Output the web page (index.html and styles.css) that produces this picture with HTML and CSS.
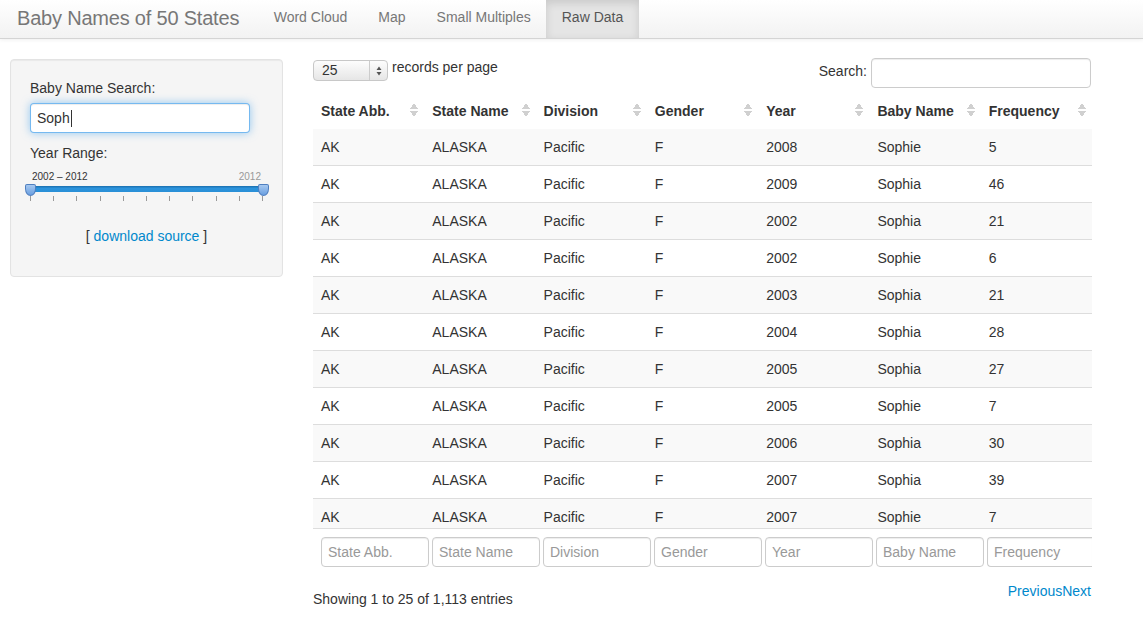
FILE: index.html
```html
<!DOCTYPE html>
<html lang="en">
<head>
<meta charset="utf-8">
<title>Baby Names of 50 States</title>
<link rel="stylesheet" href="styles.css">
</head>
<body>
<header class="navbar">
  <span class="brand">Baby Names of 50 States</span>
  <nav class="nav">
    <a class="nav-link">Word Cloud</a>
    <a class="nav-link">Map</a>
    <a class="nav-link">Small Multiples</a>
    <a class="nav-link active">Raw Data</a>
  </nav>
</header>

<div class="page">
  <aside class="well">
    <label class="label">Baby Name Search:</label>
    <div class="name-input">Soph<span class="caret"></span></div>
    <label class="label year-label">Year Range:</label>
    <div class="slider">
      <div class="slider-labels">
        <span class="range-text">2002 – 2012</span>
        <span class="max-text">2012</span>
      </div>
      <div class="track">
        <div class="bar"></div>
        <span class="handle handle-left"></span>
        <span class="handle handle-right"></span>
      </div>
      <div class="ticks">
        <i></i><i></i><i></i><i></i><i></i><i></i><i></i><i></i><i></i><i></i><i></i>
      </div>
    </div>
    <p class="download">[ <a class="link">download source</a> ]</p>
  </aside>

  <main class="main">
    <div class="controls">
      <div class="length">
        <div class="select"><span class="select-val">25</span><span class="select-arrows"><svg width="6" height="10" viewBox="0 0 6 10"><path d="M3 0.5 L5.5 4 H0.5 Z M3 9.5 L5.5 6 H0.5 Z" fill="#555"/></svg></span></div>
        <span class="length-text">records per page</span>
      </div>
      <div class="search">
        <span>Search:</span>
        <div class="search-input"></div>
      </div>
    </div>

    <div class="thead">
      <div class="th">State Abb.<span class="sort"></span></div>
      <div class="th">State Name<span class="sort"></span></div>
      <div class="th">Division<span class="sort"></span></div>
      <div class="th">Gender<span class="sort"></span></div>
      <div class="th">Year<span class="sort"></span></div>
      <div class="th">Baby Name<span class="sort"></span></div>
      <div class="th">Frequency<span class="sort"></span></div>
    </div>

    <div class="scroll-body">
      <table class="table">
        <tbody>
          <tr><td>AK</td><td>ALASKA</td><td>Pacific</td><td>F</td><td>2008</td><td>Sophie</td><td>5</td></tr>
          <tr><td>AK</td><td>ALASKA</td><td>Pacific</td><td>F</td><td>2009</td><td>Sophia</td><td>46</td></tr>
          <tr><td>AK</td><td>ALASKA</td><td>Pacific</td><td>F</td><td>2002</td><td>Sophia</td><td>21</td></tr>
          <tr><td>AK</td><td>ALASKA</td><td>Pacific</td><td>F</td><td>2002</td><td>Sophie</td><td>6</td></tr>
          <tr><td>AK</td><td>ALASKA</td><td>Pacific</td><td>F</td><td>2003</td><td>Sophia</td><td>21</td></tr>
          <tr><td>AK</td><td>ALASKA</td><td>Pacific</td><td>F</td><td>2004</td><td>Sophia</td><td>28</td></tr>
          <tr><td>AK</td><td>ALASKA</td><td>Pacific</td><td>F</td><td>2005</td><td>Sophia</td><td>27</td></tr>
          <tr><td>AK</td><td>ALASKA</td><td>Pacific</td><td>F</td><td>2005</td><td>Sophie</td><td>7</td></tr>
          <tr><td>AK</td><td>ALASKA</td><td>Pacific</td><td>F</td><td>2006</td><td>Sophia</td><td>30</td></tr>
          <tr><td>AK</td><td>ALASKA</td><td>Pacific</td><td>F</td><td>2007</td><td>Sophia</td><td>39</td></tr>
          <tr><td>AK</td><td>ALASKA</td><td>Pacific</td><td>F</td><td>2007</td><td>Sophie</td><td>7</td></tr>
        </tbody>
      </table>
    </div>

    <div class="tfoot">
      <div class="filter">State Abb.</div>
      <div class="filter">State Name</div>
      <div class="filter">Division</div>
      <div class="filter">Gender</div>
      <div class="filter">Year</div>
      <div class="filter">Baby Name</div>
      <div class="filter last">Frequency</div>
    </div>

    <div class="bottom">
      <span class="info">Showing 1 to 25 of 1,113 entries</span>
      <span class="paging"><a class="link">Previous</a><a class="link">Next</a></span>
    </div>
  </main>
</div>
</body>
</html>
```

FILE: styles.css
```css
* { box-sizing: border-box; }
html, body { margin: 0; padding: 0; }
body {
  font-family: "Liberation Sans", Arial, sans-serif;
  font-size: 14px;
  line-height: 20px;
  color: #333;
  background: #fff;
  width: 1143px;
  height: 624px;
  overflow: hidden;
}

/* navbar */
.navbar {
  height: 39px;
  display: flex;
  align-items: stretch;
  background: linear-gradient(#ffffff, #f2f2f2);
  border-bottom: 1px solid #d4d4d4;
  box-shadow: 0 1px 4px rgba(0,0,0,0.065);
}
.brand {
  font-size: 20px;
  color: #777;
  padding: 0 18px 0 17px;
  line-height: 36px;
  letter-spacing: -0.2px;
}
.nav { display: flex; margin-left: 1px; }
.nav-link {
  display: block;
  padding: 0 15.5px;
  line-height: 35px;
  color: #777;
  font-size: 14px;
}
.nav-link.active {
  background: #e5e5e5;
  color: #555;
  box-shadow: inset 0 3px 8px rgba(0,0,0,0.125);
}

/* layout */
.page {
  display: flex;
  gap: 30px;
  padding: 20px 10px 0 10px;
}

/* well */
.well {
  width: 273px;
  height: 218px;
  flex: none;
  background: #f5f5f5;
  border: 1px solid #e3e3e3;
  border-radius: 4px;
  box-shadow: inset 0 1px 1px rgba(0,0,0,0.05);
  padding: 18px 19px 19px 19px;
}
.label { display: block; margin-bottom: 5px; }
.name-input {
  width: 220px;
  height: 30px;
  background: #fff;
  border: 1px solid rgba(82,168,236,0.8);
  border-radius: 4px;
  box-shadow: inset 0 1px 1px rgba(0,0,0,0.075), 0 0 8px rgba(82,168,236,0.6);
  padding: 4px 6px;
  font-size: 14px;
  line-height: 20px;
}
.caret {
  display: inline-block;
  width: 1px;
  height: 17px;
  background: #333;
  vertical-align: -4px;
  margin-left: 1px;
}
.year-label { margin-top: 10px; }

.slider { width: 233px; margin-top: 8px; }
.slider-labels {
  display: flex;
  justify-content: space-between;
  font-size: 10px;
  line-height: 12px;
  padding: 0 2px 0 2px;
}
.range-text { color: #333; }
.max-text { color: #999; }
.track {
  position: relative;
  height: 14px;
  margin-top: 0;
}
.bar {
  position: absolute;
  left: 1px;
  right: 1px;
  top: 3px;
  height: 6px;
  background: linear-gradient(#1a6fae, #2b93dc 40%, #2a8fd6);
  border-radius: 2px;
}
.handle {
  position: absolute;
  top: 1px;
  width: 11px;
  height: 12px;
  background: linear-gradient(#a6c8f0, #6a9fe0);
  border: 1px solid #4f7fc0;
  border-radius: 2px 2px 50% 50% / 2px 2px 60% 60%;
}
.handle-left { left: -5px; }
.handle-right { right: -6px; }
.ticks {
  display: flex;
  justify-content: space-between;
  height: 5px;
  margin-top: -1px;
}
.ticks i {
  display: block;
  width: 1px;
  height: 5px;
  background: #999;
}
.download {
  margin: 25px 0 0 0;
  text-align: center;
}
.link { color: #0088cc; text-decoration: none; }

/* main */
.main { width: 779px; flex: none; }
.controls {
  display: flex;
  justify-content: space-between;
  align-items: flex-start;
  height: 37px;
  margin-top: -1px;
}
.length { display: flex; align-items: flex-start; gap: 4px; }
.select {
  margin-top: 2px;
  width: 75px;
  height: 21px;
  border: 1px solid #c8c8c8;
  border-radius: 4px;
  background: linear-gradient(#fdfdfd, #e6e6e6);
  display: flex;
  justify-content: space-between;
  align-items: center;
}
.select-val { padding-left: 8px; font-size: 14px; line-height: 19px; }
.select-arrows {
  width: 18px;
  height: 19px;
  border-left: 1px solid #ccc;
  display: flex;
  align-items: center;
  justify-content: center;
}
.length-text { line-height: 18px; }
.search { display: flex; align-items: center; gap: 4px; padding-right: 1px; }
.search span { line-height: 26px; align-self: flex-start; }
.search-input {
  width: 220px;
  height: 30px;
  border: 1px solid #ccc;
  border-radius: 4px;
  background: #fff;
  box-shadow: inset 0 1px 1px rgba(0,0,0,0.075);
}

.thead {
  display: grid;
  grid-template-columns: repeat(7, 1fr);
  height: 35px;
  margin-top: -1px;
}
.th {
  position: relative;
  font-weight: bold;
  padding: 7px 8px 6px;
  line-height: 20px;
}
.sort {
  position: absolute;
  right: 6px;
  top: 9px;
  width: 8px;
  height: 14px;
  background:
    linear-gradient(to bottom right, transparent 50%, #d0d0d0 50%) 0 0 / 4px 6px no-repeat,
    linear-gradient(to bottom left, transparent 50%, #d0d0d0 50%) 4px 0 / 4px 6px no-repeat,
    linear-gradient(to top right, transparent 50%, #d0d0d0 50%) 0 8px / 4px 6px no-repeat,
    linear-gradient(to top left, transparent 50%, #d0d0d0 50%) 4px 8px / 4px 6px no-repeat;
}

.scroll-body {
  height: 400px;
  overflow: hidden;
  border-bottom: 1px solid #ddd;
}
.table {
  width: 100%;
  border-collapse: collapse;
  table-layout: fixed;
}
.table td {
  padding: 8px;
  line-height: 20px;
  border-top: 1px solid #ddd;
}
.table tr:first-child td { border-top: none; height: 36px; }
.table tr:nth-child(odd) td { background: #f9f9f9; }

.tfoot {
  display: flex;
  gap: 3px;
  padding: 8px 0 0 8px;
  height: 39px;
  overflow: hidden;
}
.filter {
  flex: none;
  width: 108px;
  height: 30px;
  border: 1px solid #ccc;
  border-radius: 4px;
  background: #fff;
  box-shadow: inset 0 1px 1px rgba(0,0,0,0.075);
  color: #999;
  padding: 4px 6px;
  line-height: 20px;
  white-space: nowrap;
}
.filter.last { width: 105px; border-right: none; border-radius: 4px 0 0 4px; }

.bottom {
  display: flex;
  justify-content: space-between;
  align-items: flex-start;
  padding-right: 1px;
}
.info { margin-top: 21px; }
.paging { margin-top: 13px; }
```
